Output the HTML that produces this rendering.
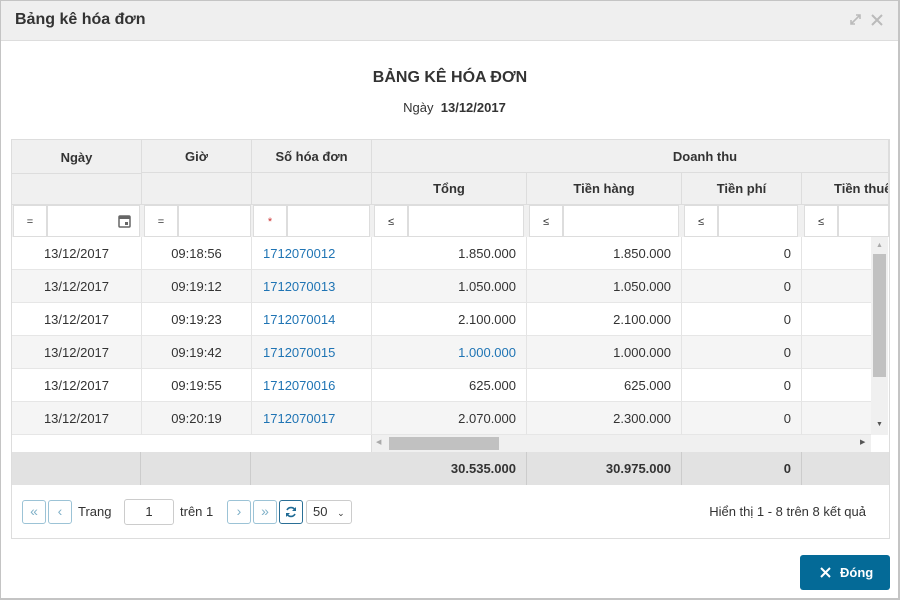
<!DOCTYPE html><html><head><meta charset="utf-8"><style>
*{box-sizing:border-box;margin:0;padding:0}
body{width:900px;height:600px;overflow:hidden;font-family:"Liberation Sans",sans-serif;font-size:13px;color:#333;background:#fff;position:relative}
.a{position:absolute}
.hd{background:#f0f0f0;font-weight:bold;color:#333;display:flex;align-items:center;justify-content:center;border-right:1px solid #ddd;border-bottom:1px solid #ddd}
.c{position:absolute;height:33px;line-height:33px;border-right:1px solid #e4e4e4;border-bottom:1px solid #e6e6e6}
.r{text-align:right;padding-right:10px}
.m{text-align:center}
.l{color:#1f74b4;padding-left:11px}
.fb{position:absolute;top:205px;height:32px;background:#fff;border:1px solid #ddd}
.op{position:absolute;top:205px;height:32px;width:34px;background:#fff;border:1px solid #ddd;font-size:11px;text-align:center;line-height:32px}
.pb{position:absolute;top:500px;width:24px;height:24px;border:1px solid #9cc3d6;border-radius:3px;color:#7fb0c8;text-align:center;line-height:21px;font-size:14px}
</style></head><body>
<div class="a" style="left:0;top:0;width:900px;height:600px;border:1px solid #c4c4c4;border-right:2px solid #c4c4c4;border-bottom:2px solid #c4c4c4"></div>
<div class="a" style="left:1px;top:1px;width:897px;height:40px;background:#efefef;border-bottom:1px solid #ddd"></div>
<div class="a" style="left:15px;top:11px;font-size:16px;font-weight:bold;color:#333">Bảng kê hóa đơn</div>
<svg class="a" style="left:849px;top:13px" width="13" height="13" viewBox="0 0 13 13"><path d="M2 11L11 2M7 2h4v4M2 7v4h4" stroke="#bbb" stroke-width="1.6" fill="none"/></svg>
<svg class="a" style="left:871px;top:14px" width="12" height="12" viewBox="0 0 12 12"><path d="M1 1L11 11M11 1L1 11" stroke="#bbb" stroke-width="2"/></svg>
<div class="a" style="left:0;width:900px;top:69px;text-align:center;font-size:16px;font-weight:bold">BẢNG KÊ HÓA ĐƠN</div>
<div class="a" style="left:0;width:909px;top:100px;text-align:center;font-size:13px">Ngày &nbsp;<b>13/12/2017</b></div>

<div class="a" style="left:11px;top:139px;width:879px;height:400px;border:1px solid #ddd"></div>
<!-- headers -->
<div class="a hd" style="left:12px;top:140px;width:130px;height:65px;align-items:flex-start;padding-top:10px">Ngày</div>
<div class="a hd" style="left:12px;top:173px;width:130px;height:32px;border-top:1px solid #ddd"></div>
<div class="a hd" style="left:142px;top:140px;width:110px;height:33px">Giờ</div>
<div class="a hd" style="left:142px;top:173px;width:110px;height:32px"></div>
<div class="a hd" style="left:252px;top:140px;width:120px;height:33px">Số hóa đơn</div>
<div class="a hd" style="left:252px;top:173px;width:120px;height:32px"></div>
<div class="a hd" style="left:372px;top:140px;width:517px;height:33px;padding-left:150px">Doanh thu</div>
<div class="a hd" style="left:372px;top:173px;width:155px;height:32px">Tổng</div>
<div class="a hd" style="left:527px;top:173px;width:155px;height:32px">Tiền hàng</div>
<div class="a hd" style="left:682px;top:173px;width:120px;height:32px">Tiền phí</div>
<div class="a hd" style="left:802px;top:173px;width:87px;height:32px;justify-content:flex-start;padding-left:32px;overflow:hidden;white-space:nowrap">Tiền thuế</div>
<div class="a" style="left:12px;top:205px;width:877px;height:32px;background:#f0f0f0"></div>
<div class="op" style="left:13px">=</div><div class="fb" style="left:47px;width:93px"></div>
<svg class="a" style="left:118px;top:214px" width="13" height="14" viewBox="0 0 13 14"><rect x="1" y="2" width="11" height="11" rx="1" fill="none" stroke="#666" stroke-width="1.5"/><rect x="1" y="2" width="11" height="3" fill="#666"/><rect x="7" y="8" width="3" height="3" fill="#666"/></svg>
<div class="op" style="left:144px">=</div><div class="fb" style="left:178px;width:73px"></div>
<div class="op" style="left:253px;color:#c33">*</div><div class="fb" style="left:287px;width:83px"></div>
<div class="op" style="left:374px">≤</div><div class="fb" style="left:408px;width:116px"></div>
<div class="op" style="left:529px">≤</div><div class="fb" style="left:563px;width:116px"></div>
<div class="op" style="left:684px">≤</div><div class="fb" style="left:718px;width:80px"></div>
<div class="op" style="left:804px">≤</div><div class="fb" style="left:838px;width:51px"></div>

<div class="a" style="left:12px;top:237px;width:859px;height:198px;overflow:hidden">
<div style="position:relative">
<div class="a" style="left:0;top:33px;width:859px;height:33px;background:#f5f5f5"></div>
<div class="a" style="left:0;top:99px;width:859px;height:33px;background:#f5f5f5"></div>
<div class="a" style="left:0;top:165px;width:859px;height:33px;background:#f5f5f5"></div>
</div></div>
<div class="a" style="left:12px;top:237px;width:859px;height:198px;overflow:hidden" id="rows">
<div class="c m" style="left:0;top:0;width:130px">13/12/2017</div><div class="c m" style="left:130px;top:0;width:110px">09:18:56</div><div class="c l" style="left:240px;top:0;width:120px">1712070012</div><div class="c r" style="left:360px;top:0;width:155px">1.850.000</div><div class="c r" style="left:515px;top:0;width:155px">1.850.000</div><div class="c r" style="left:670px;top:0;width:120px">0</div><div class="c" style="left:790px;top:0;width:80px"></div>
<div class="c m" style="left:0;top:33px;width:130px">13/12/2017</div><div class="c m" style="left:130px;top:33px;width:110px">09:19:12</div><div class="c l" style="left:240px;top:33px;width:120px">1712070013</div><div class="c r" style="left:360px;top:33px;width:155px">1.050.000</div><div class="c r" style="left:515px;top:33px;width:155px">1.050.000</div><div class="c r" style="left:670px;top:33px;width:120px">0</div><div class="c" style="left:790px;top:33px;width:80px"></div>
<div class="c m" style="left:0;top:66px;width:130px">13/12/2017</div><div class="c m" style="left:130px;top:66px;width:110px">09:19:23</div><div class="c l" style="left:240px;top:66px;width:120px">1712070014</div><div class="c r" style="left:360px;top:66px;width:155px">2.100.000</div><div class="c r" style="left:515px;top:66px;width:155px">2.100.000</div><div class="c r" style="left:670px;top:66px;width:120px">0</div><div class="c" style="left:790px;top:66px;width:80px"></div>
<div class="c m" style="left:0;top:99px;width:130px">13/12/2017</div><div class="c m" style="left:130px;top:99px;width:110px">09:19:42</div><div class="c l" style="left:240px;top:99px;width:120px">1712070015</div><div class="c r" style="left:360px;top:99px;width:155px;color:#1f74b4">1.000.000</div><div class="c r" style="left:515px;top:99px;width:155px">1.000.000</div><div class="c r" style="left:670px;top:99px;width:120px">0</div><div class="c" style="left:790px;top:99px;width:80px"></div>
<div class="c m" style="left:0;top:132px;width:130px">13/12/2017</div><div class="c m" style="left:130px;top:132px;width:110px">09:19:55</div><div class="c l" style="left:240px;top:132px;width:120px">1712070016</div><div class="c r" style="left:360px;top:132px;width:155px">625.000</div><div class="c r" style="left:515px;top:132px;width:155px">625.000</div><div class="c r" style="left:670px;top:132px;width:120px">0</div><div class="c" style="left:790px;top:132px;width:80px"></div>
<div class="c m" style="left:0;top:165px;width:130px">13/12/2017</div><div class="c m" style="left:130px;top:165px;width:110px">09:20:19</div><div class="c l" style="left:240px;top:165px;width:120px">1712070017</div><div class="c r" style="left:360px;top:165px;width:155px">2.070.000</div><div class="c r" style="left:515px;top:165px;width:155px">2.300.000</div><div class="c r" style="left:670px;top:165px;width:120px">0</div><div class="c" style="left:790px;top:165px;width:80px"></div>
</div>
<!-- scrollbars -->
<div class="a" style="left:871px;top:237px;width:17px;height:198px;background:#f0f0f0"></div>
<div class="a" style="left:873px;top:254px;width:13px;height:123px;background:#c1c1c1"></div>
<div class="a" style="left:876px;top:242px;font-size:7px;color:#aaa">▲</div>
<div class="a" style="left:876px;top:421px;font-size:7px;color:#555">▼</div>
<div class="a" style="left:371px;top:435px;width:500px;height:17px;background:#f0f0f0;border-left:1px solid #ddd"></div>
<div class="a" style="left:389px;top:437px;width:110px;height:13px;background:#c1c1c1"></div>
<div class="a" style="left:376px;top:438px;font-size:7px;color:#aaa">◀</div>
<div class="a" style="left:860px;top:438px;font-size:7px;color:#555">▶</div>
<!-- footer -->
<div class="a" style="left:12px;top:452px;width:877px;height:33px;background:#e2e2e2"></div>
<div class="a" style="left:140px;top:452px;width:1px;height:33px;background:#ccc"></div>
<div class="a" style="left:250px;top:452px;width:1px;height:33px;background:#ccc"></div>
<div class="a" style="left:526px;top:452px;width:1px;height:33px;background:#ccc"></div>
<div class="a" style="left:681px;top:452px;width:1px;height:33px;background:#ccc"></div>
<div class="a" style="left:801px;top:452px;width:1px;height:33px;background:#ccc"></div>
<div class="a" style="left:371px;top:452px;width:145px;line-height:33px;text-align:right;font-weight:bold">30.535.000</div>
<div class="a" style="left:526px;top:452px;width:145px;line-height:33px;text-align:right;font-weight:bold">30.975.000</div>
<div class="a" style="left:681px;top:452px;width:110px;line-height:33px;text-align:right;font-weight:bold">0</div>
<!-- pager -->
<div class="pb" style="left:22px">«</div><div class="pb" style="left:48px">‹</div>
<div class="a" style="left:78px;top:504px">Trang</div>
<div class="a" style="left:124px;top:499px;width:50px;height:26px;border:1px solid #ccc;border-radius:3px;text-align:center;line-height:24px">1</div>
<div class="a" style="left:180px;top:504px">trên 1</div>
<div class="pb" style="left:227px">›</div><div class="pb" style="left:253px">»</div>
<div class="pb" style="left:279px;border-color:#2a6f96;color:#1f6a94">
<svg width="14" height="14" viewBox="0 0 14 14" style="margin-top:4px"><path d="M11 5A4.5 4.5 0 0 0 3 5M3 9a4.5 4.5 0 0 0 8 0" stroke="#1f6a94" stroke-width="1.6" fill="none"/><path d="M12 2v4H8z M2 12V8h4z" fill="#1f6a94"/></svg></div>
<div class="a" style="left:306px;top:500px;width:46px;height:24px;border:1px solid #ccc;border-radius:3px;line-height:22px;padding-left:6px">50 <span style="font-size:9px;margin-left:6px">⌄</span></div>
<div class="a" style="right:34px;top:504px">Hiển thị 1 - 8 trên 8 kết quả</div>
<!-- button -->
<div class="a" style="left:800px;top:555px;width:90px;height:35px;background:#046a97;border-radius:3px;color:#fff;font-weight:bold;line-height:35px;padding-left:40px">Đóng</div>
<svg class="a" style="left:820px;top:567px" width="11" height="11" viewBox="0 0 11 11"><path d="M1 1L10 10M10 1L1 10" stroke="#fff" stroke-width="2"/></svg>
</body></html>
